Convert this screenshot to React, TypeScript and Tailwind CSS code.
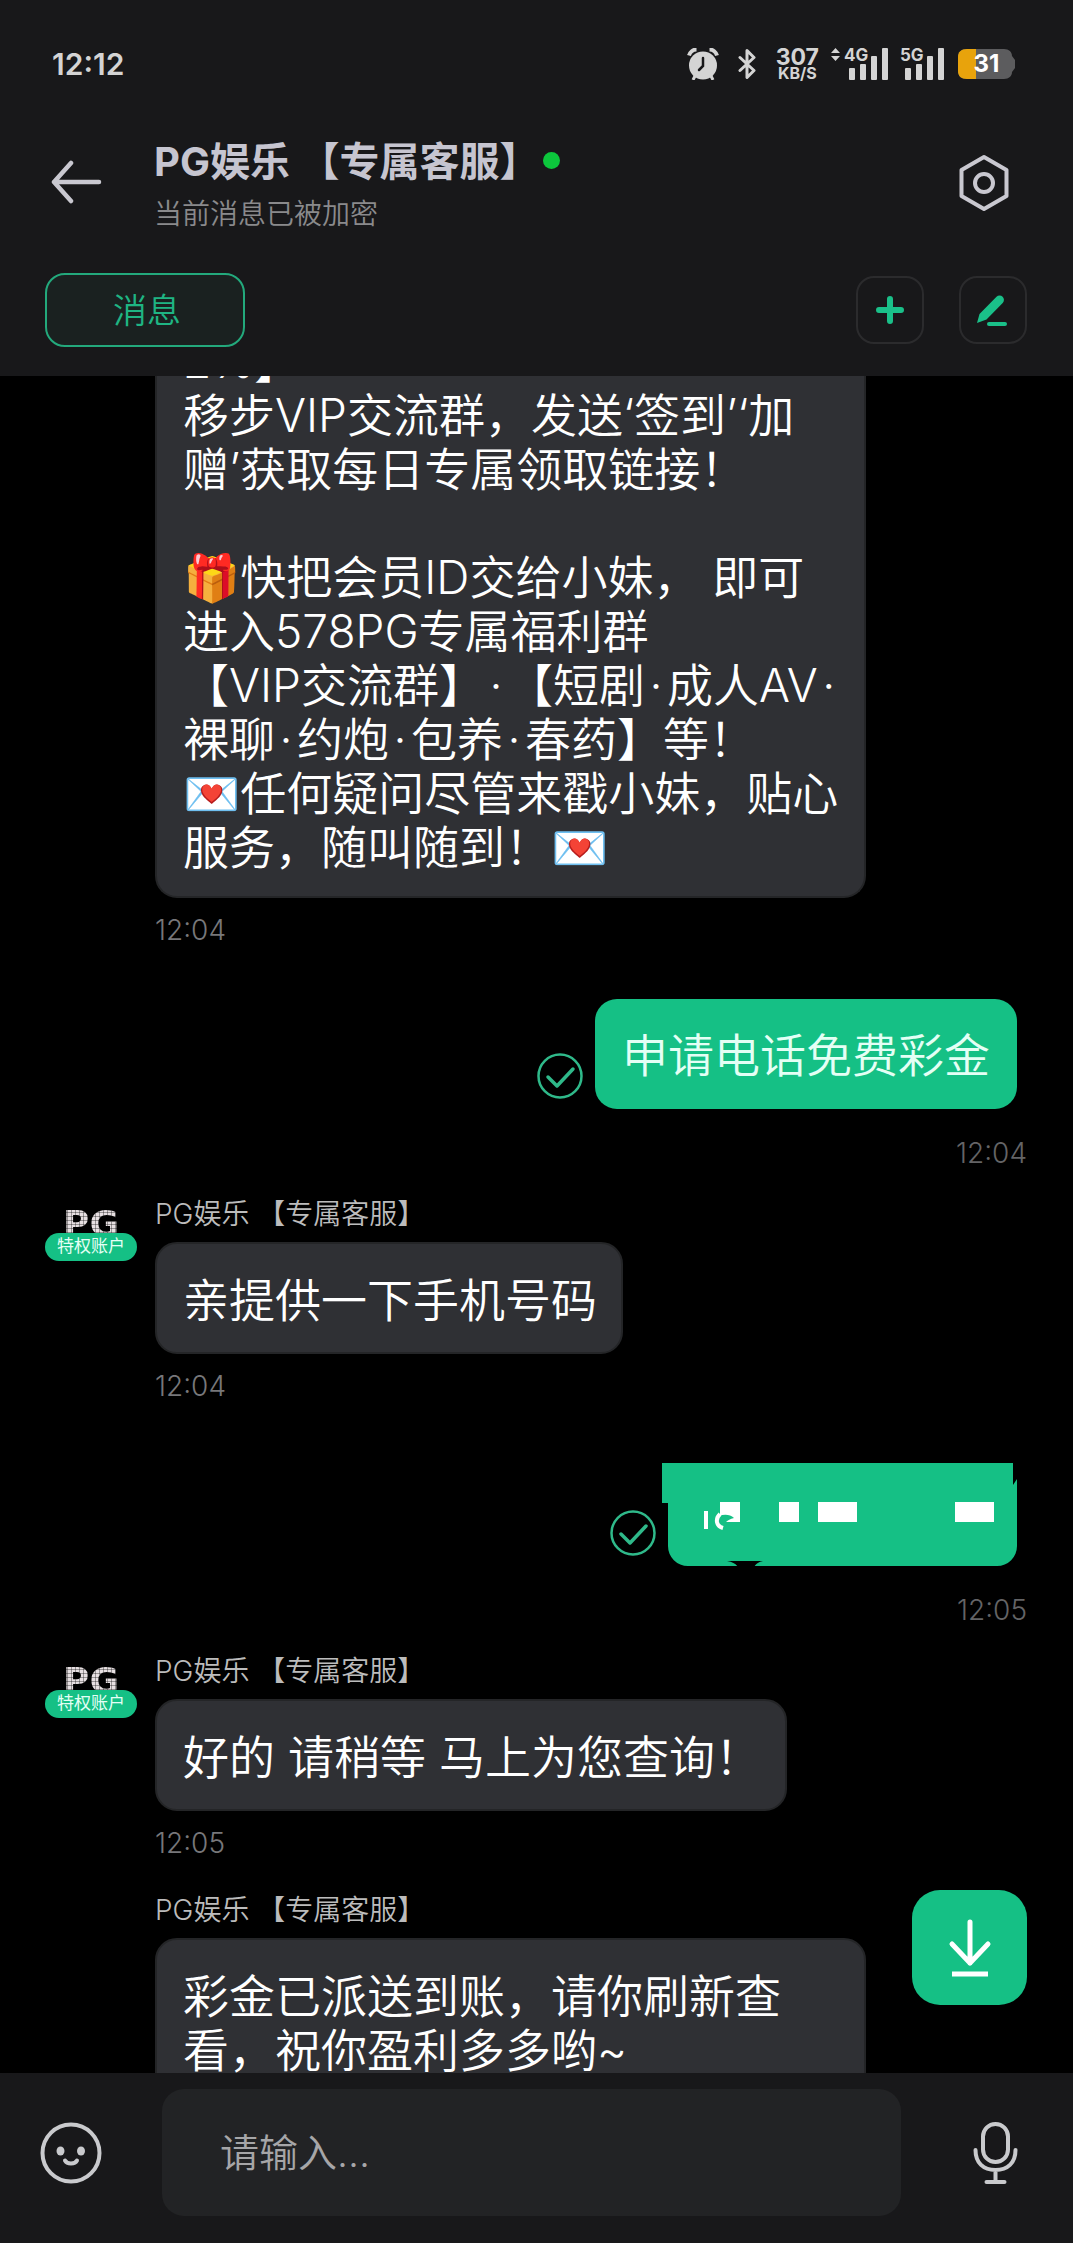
import React from 'react';

interface Message {
  id: number;
  side: 'in' | 'out';
  time: string;
  text?: string;
  wide?: boolean;
  avatar?: boolean;
}

const SENDER = 'PG娱乐 【专属客服】';

const firstMessage = `2%】
移步VIP交流群，发送‘签到’‘加
赠’获取每日专属领取链接！

🎁快把会员ID交给小妹， 即可
进入578PG专属福利群
【VIP交流群】·【短剧·成人AV·
裸聊·约炮·包养·春药】等！
💌任何疑问尽管来戳小妹，贴心
服务，随叫随到！💌`;

const messages: Message[] = [
  { id: 2, side: 'out', time: '12:04', text: '申请电话免费彩金' },
  { id: 3, side: 'in', time: '12:04', text: '亲提供一下手机号码', avatar: true },
  { id: 4, side: 'out', time: '12:05' },
  { id: 5, side: 'in', time: '12:05', text: '好的 请稍等 马上为您查询！', avatar: true },
  { id: 6, side: 'in', time: '', text: '彩金已派送到账，请你刷新查\n看，祝你盈利多多哟~', wide: true },
];

const SignalBars = ({ label, arrows }: { label: string; arrows?: boolean }) => (
  <div className="flex items-start">
    {arrows && (
      <svg className="mr-1 h-[13px] w-[9px]" viewBox="0 0 9 13" fill="#d4d4d4">
        <path d="M4.5 0 9 5H0zM4.5 13 0 8h9z" />
      </svg>
    )}
    <div className="relative h-8 w-11">
      <span className="absolute left-0 top-0 text-[17px] font-bold leading-[14px]">{label}</span>
      <svg className="h-8 w-11" viewBox="0 0 44 32" fill="#d4d4d4">
        <rect x="5" y="20" width="6" height="12" rx="1" />
        <rect x="16" y="16" width="6" height="16" rx="1" />
        <rect x="27" y="8" width="6" height="24" rx="1" />
        <rect x="38" y="0" width="6" height="32" rx="1" />
      </svg>
    </div>
  </div>
);

const StatusBar = () => (
  <div className="flex items-start justify-between pl-[52px] pr-[58px] pt-12 text-[#d4d4d4]">
    <span className="text-[30px] font-semibold leading-8">12:12</span>
    <div className="flex items-start">
      <svg className="mr-[19px] h-8 w-8" viewBox="0 0 32 32" fill="none">
        <circle cx="16" cy="17.500" r="14" fill="#d4d4d4" />
        <path d="M2 7.500C3 4 6 1.500 9.500 1.500M30 7.500C29 4 26 1.500 22.500 1.500" stroke="#d4d4d4" strokeWidth="4" />
        <path d="m8 28-2 4M24 28l2 4" stroke="#d4d4d4" strokeWidth="3" />
        <path d="M16 10v8l-4 4" stroke="#18181a" strokeWidth="2.500" strokeLinecap="round" />
      </svg>
      <svg className="mr-5 h-8 w-[18px]" viewBox="0 0 18 32" fill="none" stroke="#d4d4d4" strokeWidth="3" strokeLinejoin="round" strokeLinecap="round">
        <path d="m2 9.500 14 13L9 29.500V2.500l7 7-14 13" />
      </svg>
      <div className="mr-3 flex flex-col items-center font-bold">
        <span className="text-[23px] leading-[18px]">307</span>
        <span className="text-[16px] leading-[14px]">KB/S</span>
      </div>
      <div className="flex gap-3">
        <SignalBars label="4G" arrows />
        <SignalBars label="5G" />
      </div>
      <div className="relative ml-[14px] h-8 w-[57px]">
        <svg className="h-8 w-[57px]" viewBox="0 0 57 32">
          <path d="M9 1h37c5 0 8 3 8 7l3 4v8l-3 4c0 4-3 7-8 7H9c-6 0-9-3-9-8V9c0-5 3-8 9-8z" fill="#5c5c5e" />
          <path d="M18 1H9C3 1 0 4 0 9v14c0 5 3 8 9 8h9z" fill="#e8a30c" />
        </svg>
        <span className="absolute inset-0 text-center text-[24px] font-bold leading-8 text-white">31</span>
      </div>
    </div>
  </div>
);

const Header = () => (
  <header className="flex h-[376px] shrink-0 flex-col bg-[#18181a]">
    <StatusBar />
    <div className="mt-[58px] flex items-start pl-[51px] pr-16">
      <button aria-label="返回" className="mt-[21px]">
        <svg className="h-[46px] w-[51px]" viewBox="0 0 51 46" fill="none" stroke="#c9c8d0" strokeWidth="4.500" strokeLinecap="round" strokeLinejoin="round">
          <path d="M48 23H3M20 4 3 23l17 19" />
        </svg>
      </button>
      <div className="ml-[52px] flex-1">
        <div className="flex items-center">
          <h1 className="text-[40px] font-bold leading-[48px] text-[#c6c5d0]">{SENDER}</h1>
          <span className="mb-1 ml-1 h-[17px] w-[17px] rounded-full bg-[#0cc63c]" />
        </div>
        <p className="mt-3 text-[28px] font-[350] leading-8 text-[#8a8a8c]">当前消息已被加密</p>
      </div>
      <button aria-label="设置" className="mt-4">
        <svg className="h-[58px] w-[50px]" viewBox="0 0 50 58" fill="none" stroke="#c9c8d0" strokeWidth="4">
          <path d="M25 3 47.500 16v26L25 55 2.500 42V16z" strokeLinejoin="round" />
          <circle cx="25" cy="29" r="9" />
        </svg>
      </button>
    </div>
    <div className="mt-[43px] flex items-center justify-between pl-[45px] pr-[46px]">
      <button className="h-[74px] w-[200px] rounded-[20px] border-2 border-[#23a97c] bg-[#1a2120] pl-1 text-[34px] font-[350] text-[#1fb583]">
        消息
      </button>
      <div className="flex gap-[35px]">
        <button aria-label="添加" className="flex h-[68px] w-[68px] items-center justify-center rounded-[18px] border-2 border-[#2b2b2d]">
          <svg className="h-[30px] w-[30px]" viewBox="0 0 30 30" stroke="#1ac089" strokeWidth="6" strokeLinecap="round">
            <path d="M15 4v22M4 15h22" />
          </svg>
        </button>
        <button aria-label="编辑" className="flex h-[68px] w-[68px] items-center justify-center rounded-[18px] border-2 border-[#2b2b2d]">
          <svg className="h-[32px] w-[32px]" viewBox="0 0 32 32" fill="#1ac089">
            <path d="M19.500 2.800a4.300 4.300 0 0 1 6.200 6.100L9.500 25.500 0 29l2.500-9z" />
            <path d="M12 30h16" stroke="#1ac089" strokeWidth="4" strokeLinecap="round" />
          </svg>
        </button>
      </div>
    </div>
  </header>
);

// middle dots take half a character, like the rest of the CJK text
const MessageText = ({ text }: { text: string }) => (
  <>
    {text.split('·').map((part, i) => (
      <React.Fragment key={i}>
        {i > 0 && <span className="inline-block w-[22px] text-center">·</span>}
        {part}
      </React.Fragment>
    ))}
  </>
);

const SentCheck = () => (
  <svg className="mb-[10px] mr-3 h-[46px] w-[46px]" viewBox="0 0 46 46" fill="none" stroke="#2fb98a" aria-label="已发送">
    <circle cx="23" cy="23" r="21.500" strokeWidth="2.500" />
    <path d="m11 24 9 9 16-17" strokeWidth="3.500" strokeLinecap="round" strokeLinejoin="round" />
  </svg>
);

// phone number bubble with most of its content painted over
const RedactedBubble = () => (
  <svg className="-ml-[6px] mt-2 h-[103px] w-[355px]" viewBox="0 0 355 103">
    <path d="M0 0h351v22l4-6v67a20 20 0 0 1-20 20H26A20 20 0 0 1 6 83V40H0z" fill="#15c085" />
    <path d="M65 98h36c-5 1-7 3-9 6H76c-2-3-5-5-11-6z" fill="#000" />
    <g fill="#fff">
      <path d="M58 39h20v20H58z" />
      <path d="M117 39h20v20h-20zM156 39h39v20h-39zM293 39h39v20h-39z" />
      <path d="M42 48h4v18h-4z" />
    </g>
    <path d="M57 53c5-2 11-2 15 2-4 1-6 2-8 4H78v5H60c-3-3-5-8-3-11z" fill="#15c085" />
    <path d="M58 51c-5 5-4 12 3 14" fill="none" stroke="#fff" strokeWidth="4" />
  </svg>
);

const Avatar = () => (
  <div className="flex w-[92px] flex-col items-center">
    <span className="h-[31px] bg-[#e6dfe1] bg-[repeating-linear-gradient(90deg,#0005_0_1px,transparent_1px_4px),repeating-linear-gradient(0deg,#0005_0_1px,transparent_1px_4px)] bg-clip-text pt-1 font-['DejaVu_Sans'] text-[36px] font-bold leading-9 text-transparent">
      PG
    </span>
    <span className="relative flex h-7 w-full items-center justify-center rounded-full bg-[#15c085] text-[17px] text-[#e4fff5]">
      特权账户
    </span>
  </div>
);

const Received = ({ message }: { message: Message }) => (
  <div className={`flex gap-[18px] ${message.avatar ? 'pt-[29px]' : 'pt-[35px]'}`}>
    <div className="w-[92px] shrink-0 pt-1">{message.avatar && <Avatar />}</div>
    <div className="flex min-w-0 flex-1 flex-col items-start">
      <p className="text-[28px] font-[350] leading-8 text-[#bcbcbc]">{SENDER}</p>
      <div
        className={`mt-3 rounded-[22px] border-2 border-[#242527] bg-[#2f3034] pb-[25px] pl-[26px] pr-6 pt-[29px] ${
          message.wide ? 'w-[711px] max-w-full' : ''
        }`}
      >
        <p className="whitespace-pre-line text-[46px] font-[350] leading-[54px] text-white">
          <MessageText text={message.text ?? ''} />
        </p>
      </div>
      <time className="mt-4 text-[28px] font-light leading-8 text-[#77777a]">{message.time}</time>
    </div>
  </div>
);

const Sent = ({ message }: { message: Message }) => (
  <div className="flex flex-col items-end pt-[53px]">
    <div className="mr-[10px] flex items-end">
      <SentCheck />
      {message.text ? (
        <p className="rounded-[22px] bg-[#15c085] px-[27px] pb-[27px] pt-[29px] text-[46px] font-[350] leading-[54px] text-[#e4fff5]">
          {message.text}
        </p>
      ) : (
        <RedactedBubble />
      )}
    </div>
    <time className="mt-7 text-[28px] font-light leading-8 text-[#646466]">{message.time}</time>
  </div>
);

const Composer = () => (
  <footer className="flex h-[170px] shrink-0 items-start bg-[#18181a] pl-10 pr-[55px] pt-4">
    <button aria-label="表情" className="mt-[33px]">
      <svg className="h-[62px] w-[62px]" viewBox="0 0 62 62" fill="none" stroke="#c9cacd" strokeWidth="4">
        <circle cx="31" cy="31" r="28.500" />
        <g fill="#c9cacd" stroke="none">
          <ellipse cx="20.500" cy="29" rx="4" ry="4.500" />
          <ellipse cx="41" cy="29" rx="4" ry="4.500" />
        </g>
        <path d="M25 38.500c2 4 10 4 12 0" strokeLinecap="round" />
      </svg>
    </button>
    <input
      aria-label="请输入"
      placeholder="请输入..."
      className="ml-[60px] mr-[72px] h-[127px] min-w-0 flex-1 rounded-[22px] bg-[#222325] px-[58px] text-[39px] font-[350] text-white outline-none placeholder:text-[#a6a6a8]"
    />
    <button aria-label="语音" className="mt-[33px]">
      <svg className="h-[62px] w-[45px]" viewBox="0 0 45 62" fill="none" stroke="#c9cacd" strokeWidth="4" strokeLinecap="round">
        <rect x="10" y="2" width="25" height="38" rx="12.500" />
        <path d="M2.500 28c0 13 8 20 20 20s20-7 20-20M22.500 48v11" />
        <path d="M13.500 60h18" />
      </svg>
    </button>
  </footer>
);

export default function App() {
  return (
    <div
      lang="zh-CN"
      className="flex h-screen flex-col overflow-hidden bg-black font-[Inter,'Noto_Sans_CJK_SC','Noto_Color_Emoji',sans-serif]"
    >
      <Header />
      <main className="relative min-h-0 flex-1 overflow-hidden pl-[45px] pr-[46px]">
        <div className="-mt-[42px] flex flex-col items-start pl-[110px]">
          <div className="w-[711px] max-w-full rounded-b-[22px] border-2 border-t-0 border-[#242527] bg-[#2f3034] pb-[22px] pl-[26px] pr-5">
            <p className="whitespace-pre-line text-[46px] font-[350] leading-[54px] text-white">
              <MessageText text={firstMessage} />
            </p>
          </div>
          <time className="mt-4 text-[28px] font-light leading-8 text-[#77777a]">12:04</time>
        </div>
        {messages.map((message) =>
          message.side === 'in' ? (
            <Received key={message.id} message={message} />
          ) : (
            <Sent key={message.id} message={message} />
          )
        )}
        <button
          aria-label="滚动到底部"
          className="absolute bottom-[68px] right-[46px] flex h-[115px] w-[115px] items-center justify-center rounded-[28px] bg-[#15c085]"
        >
          <svg className="h-[58px] w-[44px]" viewBox="0 0 44 58" fill="none" stroke="#fff" strokeWidth="5" strokeLinecap="round" strokeLinejoin="round">
            <path d="M22 3v41M4 25l18 19 18-19" />
            <path d="M4 55h36" strokeLinecap="butt" />
          </svg>
        </button>
      </main>
      <Composer />
    </div>
  );
}
